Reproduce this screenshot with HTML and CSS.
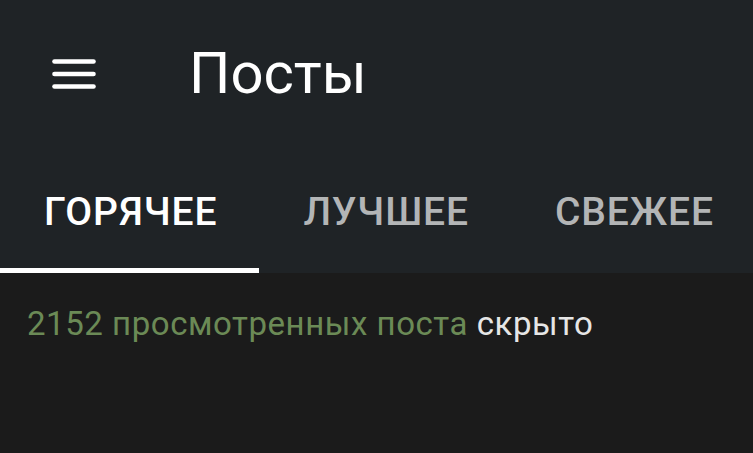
FILE: index.html
```html
<!DOCTYPE html>
<html lang="ru">
<head>
  <meta charset="UTF-8" />
  <meta name="viewport" content="width=device-width, initial-scale=1.0"/>
  <title>Посты</title>
  <link rel="stylesheet" href="styles.css">
</head>
<body>

  <div class="appbar">
    <div class="toolbar">
      <svg class="menu-icon" width="44" height="32" viewBox="0 0 44 32">
        <line x1="2.5" y1="3.5" x2="41.5" y2="3.5" />
        <line x1="2.5" y1="16" x2="41.5" y2="16" />
        <line x1="2.5" y1="28.5" x2="41.5" y2="28.5" />
      </svg>
      <h1 class="title">Посты</h1>
    </div>
    <div class="tabs">
      <div class="tab active">ГОРЯЧЕЕ</div>
      <div class="tab">ЛУЧШЕЕ</div>
      <div class="tab">СВЕЖЕЕ</div>
    </div>
  </div>

  <div class="content">
    <p class="hidden-note"><span class="count">2152 просмотренных поста</span> скрыто</p>
  </div>

</body>
</html>
```

FILE: styles.css
```css
html, body {
  margin: 0;
  padding: 0;
  font-family: Roboto, "Noto Sans", sans-serif;
  background-color: #1b1b1b;
  color: #ffffff;
  height: 100%;
  overflow: hidden;
}
.appbar {
  background-color: #1f2326;
}
.toolbar {
  display: flex;
  align-items: center;
  height: 152px;
  padding-left: 52px;
}
.menu-icon {
  flex: none;
  margin-top: -4px;
}
.menu-icon line {
  stroke: #ffffff;
  stroke-width: 4.6;
  stroke-linecap: round;
}
.title {
  margin: -6px 0 0 93px;
  font-size: 58px;
  font-weight: 400;
  line-height: 1;
}
.tabs {
  display: flex;
  height: 121px;
}
.tab {
  flex: none;
  box-sizing: border-box;
  display: flex;
  align-items: center;
  padding: 4px 42px 0 44px;
  font-size: 39px;
  font-weight: 500;
  letter-spacing: 0.9px;
  color: #b3b5b6;
  border-bottom: 5px solid transparent;
}
.tab.active {
  color: #ffffff;
  border-bottom-color: #ffffff;
}
.content {
  padding: 31px 27px 0;
}
.hidden-note {
  margin: 0;
  font-size: 33px;
  letter-spacing: 0.55px;
  line-height: 1.2;
  color: #e6e6e6;
}
.count {
  color: #6b8a56;
}
```
